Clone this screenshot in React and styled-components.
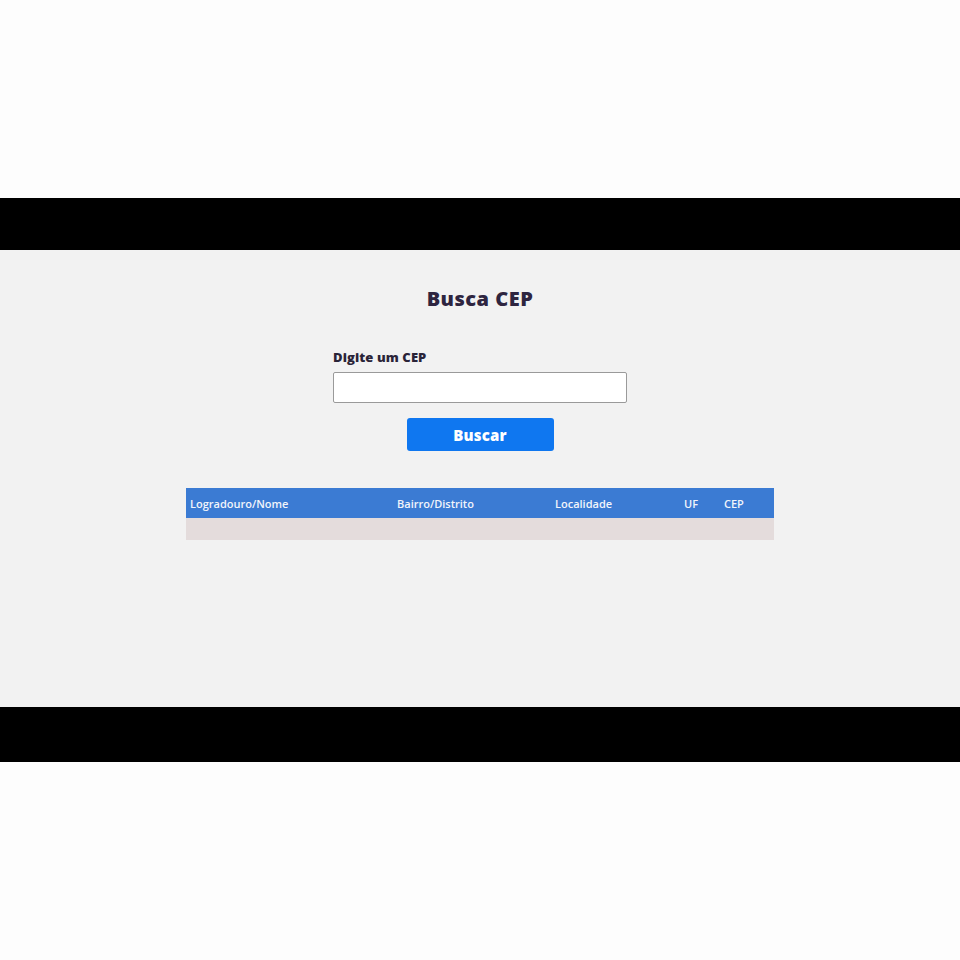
import React from "react";
import styled, { createGlobalStyle } from "styled-components";

const Global = createGlobalStyle`
  html, body { margin: 0; padding: 0; background: #fdfdfd; }
  body { font-family: "Open Sans", "Lato", sans-serif; }
`;

const Page = styled.div`
  width: 960px;
  height: 960px;
  display: flex;
  flex-direction: column;
  background: #fdfdfd;
`;

const Spacer = styled.div`
  height: ${(p) => p.$h}px;
  flex: none;
`;

const Band = styled.div`
  height: ${(p) => p.$h}px;
  background: #000;
  flex: none;
`;

const Screen = styled.main`
  height: 457px;
  flex: none;
  background: #f2f2f2;
  display: flex;
  flex-direction: column;
  align-items: center;
`;

const Title = styled.h1`
  margin: 38px 0 0;
  font-family: "Open Sans", sans-serif;
  font-weight: 800;
  font-size: 20px;
  letter-spacing: 0.5px;
  color: #2e2540;
  line-height: 22px;
`;

const Form = styled.form`
  margin-top: 39px;
  width: 294px;
  display: flex;
  flex-direction: column;
  align-items: center;
`;

const Label = styled.label`
  align-self: flex-start;
  font-family: "Open Sans", sans-serif;
  font-weight: 800;
  font-size: 13px;
  letter-spacing: 0.1px;
  color: #2a2438;
  line-height: 16px;
  margin-bottom: 7px;
`;

const Input = styled.input`
  box-sizing: border-box;
  width: 294px;
  height: 31px;
  border: 1px solid #9a9a9a;
  border-radius: 2px;
  background: #fff;
  outline: none;
`;

const Button = styled.button`
  margin-top: 15px;
  width: 147px;
  height: 33px;
  border: none;
  border-radius: 3px;
  background: #0f77f0;
  color: #fff;
  font-family: "Open Sans", sans-serif;
  font-weight: 800;
  font-size: 15px;
  letter-spacing: 0.2px;
`;

const Table = styled.div`
  margin-top: 37px;
  width: 588px;
  display: flex;
  flex-direction: column;
`;

const Row = styled.div`
  display: grid;
  grid-template-columns: 207px 158px 129px 40px 1fr;
  align-items: center;
  padding: 0 4px;
  height: ${(p) => p.$h}px;
  background: ${(p) => p.$bg};
`;

const Th = styled.span`
  font-family: "Open Sans", sans-serif;
  font-weight: 600;
  font-size: 11px;
  color: #f2f5fb;
`;

const cols = ["Logradouro/Nome", "Bairro/Distrito", "Localidade", "UF", "CEP"];

export default function App() {
  return (
    <Page>
      <Global />
      <Spacer $h={198} />
      <Band $h={52} />
      <Screen>
        <Title>Busca CEP</Title>
        <Form onSubmit={(e) => e.preventDefault()}>
          <Label htmlFor="cep">Digite um CEP</Label>
          <Input id="cep" type="text" />
          <Button type="submit">Buscar</Button>
        </Form>
        <Table>
          <Row $h={30} $bg="#3b7bd3">
            {cols.map((c) => (
              <Th key={c}>{c}</Th>
            ))}
          </Row>
          <Row $h={22} $bg="#e4dcdc" />
        </Table>
      </Screen>
      <Band $h={55} />
    </Page>
  );
}
